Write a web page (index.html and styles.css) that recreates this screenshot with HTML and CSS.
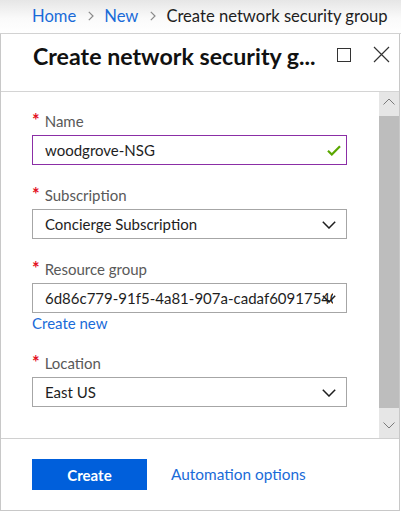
FILE: index.html
```html
<!DOCTYPE html>
<html lang="en">
<head>
<meta charset="utf-8">
<title>Create network security group</title>
<link rel="stylesheet" href="styles.css">
</head>
<body>
<nav class="breadcrumb">
  <a class="crumb-link" href="#">Home</a>
  <svg class="crumb-sep" width="6" height="10" viewBox="0 0 6 10"><path d="M0.8 0.8 L5 5 L0.8 9.2" fill="none" stroke="#8a8a8a" stroke-width="1.2"/></svg>
  <a class="crumb-link" href="#">New</a>
  <svg class="crumb-sep" width="6" height="10" viewBox="0 0 6 10"><path d="M0.8 0.8 L5 5 L0.8 9.2" fill="none" stroke="#8a8a8a" stroke-width="1.2"/></svg>
  <span class="crumb-current">Create network security group</span>
</nav>
<div class="blade">
  <header class="blade-header">
    <h1 class="blade-title">Create network security g...</h1>
    <div class="blade-actions">
      <svg class="icon-max" width="16" height="16" viewBox="0 0 16 16"><rect x="1.5" y="1.5" width="13" height="13" fill="none" stroke="#333" stroke-width="1"/></svg>
      <svg class="icon-close" width="17" height="17" viewBox="0 0 17 17"><path d="M1 1 L16 16 M16 1 L1 16" fill="none" stroke="#333" stroke-width="1.2"/></svg>
    </div>
  </header>
  <div class="blade-body">
    <div class="form">
      <div class="field">
        <label class="field-label"><span class="req">*</span>Name</label>
        <div class="input input-focus">
          <span class="input-text">woodgrove-NSG</span>
          <svg class="check" width="14" height="11" viewBox="0 0 14 11"><path d="M1 5.8 L4.8 9.5 L13 1.2" fill="none" stroke="#5aa700" stroke-width="2.2"/></svg>
        </div>
      </div>
      <div class="field">
        <label class="field-label"><span class="req">*</span>Subscription</label>
        <div class="input select">
          <span class="input-text">Concierge Subscription</span>
          <svg class="chev" width="14" height="8" viewBox="0 0 14 8"><path d="M0.8 0.8 L7 7 L13.2 0.8" fill="none" stroke="#1e1e1e" stroke-width="1.5"/></svg>
        </div>
      </div>
      <div class="field">
        <label class="field-label"><span class="req">*</span>Resource group</label>
        <div class="input select">
          <span class="input-text">6d86c779-91f5-4a81-907a-cadaf609175401</span>
          <svg class="chev" width="14" height="8" viewBox="0 0 14 8"><path d="M0.8 0.8 L7 7 L13.2 0.8" fill="none" stroke="#1e1e1e" stroke-width="1.5"/></svg>
        </div>
        <a class="create-new" href="#">Create new</a>
      </div>
      <div class="field">
        <label class="field-label"><span class="req">*</span>Location</label>
        <div class="input select">
          <span class="input-text">East US</span>
          <svg class="chev" width="14" height="8" viewBox="0 0 14 8"><path d="M0.8 0.8 L7 7 L13.2 0.8" fill="none" stroke="#1e1e1e" stroke-width="1.5"/></svg>
        </div>
      </div>
    </div>
    <div class="scrollbar">
      <div class="sb-up"><svg width="12" height="7" viewBox="0 0 12 7"><path d="M0.5 6.5 L6 1 L11.5 6.5" fill="none" stroke="#7a7a7a" stroke-width="1"/></svg></div>
      <div class="sb-thumb"></div>
      <div class="sb-down"><svg width="12" height="7" viewBox="0 0 12 7"><path d="M0.5 0.5 L6 6 L11.5 0.5" fill="none" stroke="#7a7a7a" stroke-width="1"/></svg></div>
    </div>
  </div>
  <footer class="blade-footer">
    <button class="btn-primary">Create</button>
    <a class="footer-link" href="#">Automation options</a>
  </footer>
</div>
</body>
</html>
```
FILE: styles.css
```css
* { box-sizing: border-box; }
html, body { margin: 0; padding: 0; }
body {
  width: 401px;
  height: 511px;
  background: #fff;
  font-family: Lato, "Open Sans", sans-serif;
  color: #1e1e1e;
  overflow: hidden;
}
a { text-decoration: none; }

.breadcrumb {
  height: 34px;
  padding-left: 32px;
  display: flex;
  align-items: center;
  background: linear-gradient(#e6e6e6, #fafafa 55%, #ffffff);
  border-bottom: 1px solid #d2d2d2;
  font-size: 16.6px;
  padding-bottom: 1px;
}
.crumb-link { color: #1a6bd8; }
.crumb-sep { margin: 0 10px 0 12px; }
.crumb-current { color: #1e1e1e; }

.blade {
  width: 400px;
  height: 477px;
  border: 1px solid #c8c8c8;
  border-top: none;
  display: flex;
  flex-direction: column;
}

.blade-header {
  height: 58px;
  flex: none;
  display: flex;
  align-items: flex-start;
  padding: 7px 9px 0 32px;
  border-bottom: 1px solid #d4d4d4;
}
.blade-title {
  margin: 0;
  flex: 1;
  font-size: 23.2px;
  font-weight: 700;
  line-height: 30px;
  color: #111;
  white-space: nowrap;
  overflow: hidden;
}
.blade-actions {
  display: flex;
  align-items: center;
  gap: 21px;
  padding-top: 5px;
}

.blade-body {
  flex: 1;
  display: flex;
  min-height: 0;
}
.form {
  flex: 1;
  padding: 19px 0 0 31px;
}
.field { margin-bottom: 20px; }
.field-label {
  display: block;
  height: 20px;
  line-height: 20px;
  font-size: 15px;
  color: #595959;
  margin-bottom: 4px;
}
.req {
  color: #e3101e;
  font-size: 18px;
  font-weight: 700;
  line-height: 1;
  margin-right: 5px;
}
.input {
  position: relative;
  width: 315px;
  height: 30px;
  border: 1px solid #a6a6a6;
  padding: 0 13px 0 12px;
  display: flex;
  align-items: center;
  font-size: 15px;
  color: #1e1e1e;
}
.input-focus { border-color: #8b2ea6; }
.input-text {
  white-space: nowrap;
  overflow: hidden;
  flex: 1;
}
.check, .chev {
  position: absolute;
  right: 10px;
  top: 50%;
}
.check { margin-top: -5px; right: 5px; }
.chev { margin-top: -3px; }

.create-new {
  display: block;
  height: 21px;
  line-height: 21px;
  font-size: 15px;
  color: #1a6bd8;
  margin-bottom: -1px;
}

.scrollbar {
  width: 20px;
  flex: none;
  background: #e6e6e6;
  display: flex;
  flex-direction: column;
}
.sb-up {
  height: 24px;
  display: flex;
  justify-content: center;
  padding-top: 6px;
}
.sb-thumb {
  height: 292px;
  background: #bdbdbd;
}
.sb-down {
  flex: 1;
  display: flex;
  justify-content: center;
  align-items: center;
  padding-top: 4px;
}

.blade-footer {
  height: 72px;
  flex: none;
  border-top: 1px solid #d0d0d0;
  padding: 20px 0 0 31px;
  display: flex;
  align-items: flex-start;
}
.btn-primary {
  width: 115px;
  height: 31px;
  border: none;
  background: #005fdb;
  color: #fff;
  font-family: inherit;
  font-size: 15px;
  font-weight: 700;
  padding: 0;
}
.footer-link {
  margin-left: 24px;
  line-height: 31px;
  font-size: 15.4px;
  color: #1a6bd8;
}
```
